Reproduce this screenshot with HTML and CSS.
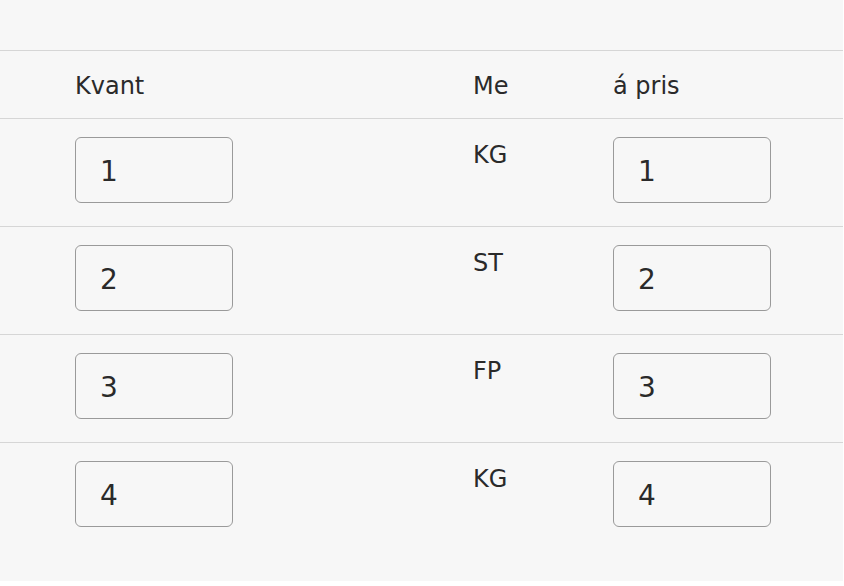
FILE: index.html
```html
<!DOCTYPE html>
<html lang="sv">
<head>
<meta charset="utf-8">
<title>Kvant</title>
<link rel="stylesheet" href="styles.css">
</head>
<body>
<div class="page">
  <div class="top-space"></div>
  <div class="table">
    <div class="row head">
      <div class="cell first">Kvant</div>
      <div class="cell">Me</div>
      <div class="cell">á pris</div>
    </div>
    <div class="row">
      <div class="cell first"><input class="field" type="text" value="1"></div>
      <div class="cell unit">KG</div>
      <div class="cell"><input class="field" type="text" value="1"></div>
    </div>
    <div class="row">
      <div class="cell first"><input class="field" type="text" value="2"></div>
      <div class="cell unit">ST</div>
      <div class="cell"><input class="field" type="text" value="2"></div>
    </div>
    <div class="row">
      <div class="cell first"><input class="field" type="text" value="3"></div>
      <div class="cell unit">FP</div>
      <div class="cell"><input class="field" type="text" value="3"></div>
    </div>
    <div class="row last">
      <div class="cell first"><input class="field" type="text" value="4"></div>
      <div class="cell unit">KG</div>
      <div class="cell"><input class="field" type="text" value="4"></div>
    </div>
  </div>
</div>
</body>
</html>
```

FILE: styles.css
```css
html, body {
  margin: 0;
  padding: 0;
  background: #ffffff;
}

body {
  font-family: "DejaVu Sans", Verdana, sans-serif;
  color: #2a2a2a;
}

.page {
  width: 843px;
  height: 581px;
  background: #f7f7f7;
  overflow: hidden;
}

.top-space {
  height: 50px;
}

.table {
  border-top: 1px solid #d6d6d6;
}

.row {
  display: grid;
  grid-template-columns: 473px 140px 1fr;
  align-items: start;
  border-bottom: 1px solid #d6d6d6;
  padding: 18px 0 23px;
}

.row.last {
  border-bottom: none;
}

.row.head {
  padding: 21px 0 18px;
}

.cell {
  font-size: 24px;
  line-height: 28px;
}

.cell.first {
  padding-left: 75px;
}

.cell.unit {
  padding-top: 4px;
}

.field {
  display: block;
  box-sizing: border-box;
  width: 158px;
  height: 66px;
  margin: 0;
  padding: 2px 0 0 24px;
  border: 1px solid #9a9a9a;
  border-radius: 6px;
  background: #f7f7f7;
  font-family: "DejaVu Sans", Verdana, sans-serif;
  font-size: 28px;
  color: #2a2a2a;
  outline: none;
}
```
